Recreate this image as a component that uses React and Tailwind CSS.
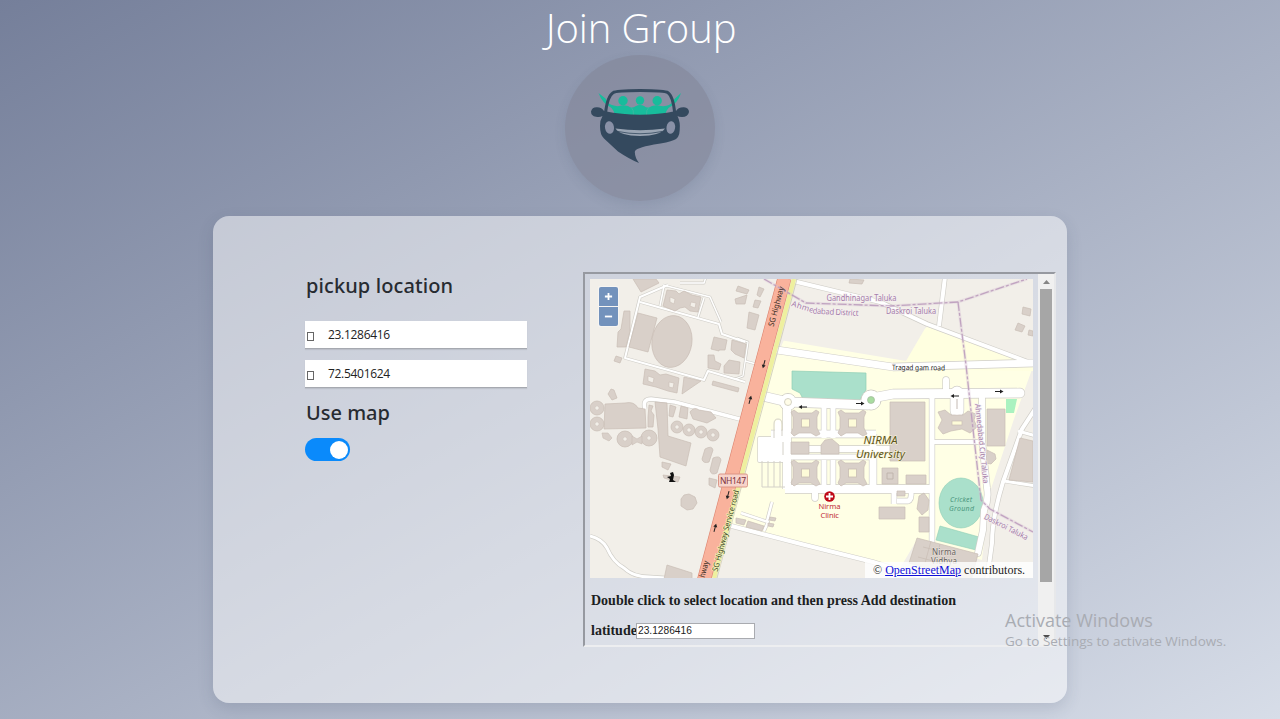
import React from "react";

const B = "#d9d0c9";
const BS = "#c9bdb5";
const SANS = "'Noto Sans','Open Sans',sans-serif";

function CarLogo() {
  return (
    <svg viewBox="590 86 100 78" className="block h-[78px] w-[100px]">
      <g fill="#18bc9c">
        <path d="M598.500 93 L605.500 98.500 Q608 104 612 105 Q616 106.500 619 106 Q623 104.500 628 106 Q632 109 635.500 106.200 Q640 104 644.500 106.200 Q647 109 652 106 Q657 104.500 661 106 Q666 106.500 669 105 Q673 103 674.500 99 L681 93 Q678 103 668.500 108 Q665.500 111 665 115.500 H615 Q614.500 111 611.500 108 Q602 103 598.500 93Z" />
        <circle cx="623" cy="100.800" r="4.700" />
        <circle cx="640" cy="100.500" r="4.200" />
        <circle cx="657.200" cy="100.800" r="4.700" />
      </g>
      <g fill="none" stroke="#4fb5a3" strokeWidth=".6">
        <path d="M631 107 Q634 110 633.500 115" />
        <path d="M649 107 Q646 110 646.500 115" />
      </g>
      <path
        d="M605.500 113 Q607.500 96 613 92.700 Q616 90.800 640 90.600 Q665 90.800 668 92.700 Q673 96 674.700 113"
        fill="none"
        stroke="#34495e"
        strokeWidth="3"
      />
      <path
        fill="#34495e"
        d="M604 111 Q640 118.500 676 111 Q678 107 684 107.200 Q689 108 689 112 Q688 117 682 117 Q678.500 117 677.500 116 Q680.500 122 679.700 130 Q679.500 138 674 140 Q668 142.500 654 144.500 Q634.500 148 634.800 152 Q635 158 639 163 Q630 159.500 618 151.500 L604 138.500 Q600 135 600 126 Q600 120 602.500 116 Q600 117.500 596 116.800 Q591 116 591 111.500 Q592 107 597 107.200 Q602 107.500 604 111Z"
      />
      <ellipse cx="609.500" cy="127.500" rx="4.500" ry="6.300" fill="#8991a7" transform="rotate(-9 609.500 127.500)" />
      <ellipse cx="670.800" cy="127.500" rx="4.300" ry="6.300" fill="#8991a7" transform="rotate(9 670.800 127.500)" />
      <path d="M615.500 128.600 Q640 132 665 128.600 Q660 136 640 136 Q620 136 615.500 128.600Z" fill="#9aa5b4" />
      <path d="M618 131.500 Q640 136 662 131.500" fill="none" stroke="#34495e" strokeWidth=".8" />
    </svg>
  );
}

function Block({ x, y }) {
  return (
    <g transform={`translate(${x} ${y})`}>
      <path d="M0 2 L3 0 L7 3 H21 L25 0 L28 2 L26 7 V18 L29 24 L25 26 L20 23 H8 L3 26 L0 23 L2 18 V7Z" fill={B} stroke={BS} strokeWidth=".7" />
      <rect x="10.500" y="9" width="8" height="8" fill="#fdfbd8" stroke={BS} strokeWidth=".8" />
    </g>
  );
}

function Ring({ x, y, r }) {
  return (
    <g>
      <circle cx={x} cy={y} r={r} fill={B} stroke={BS} strokeWidth=".7" />
      <path d={`M${x - 2.500} ${y} l2.500 -2.500 l2.500 2.500 l-2.500 2.500Z`} fill="#f2efe9" stroke={BS} strokeWidth=".5" />
    </g>
  );
}

function Arrow({ x, y, r }) {
  return (
    <g transform={`translate(${x} ${y}) rotate(${r})`}>
      <path d="M-4 0H2" stroke="#222" strokeWidth="1" />
      <path d="M1 -2L4.500 0L1 2Z" fill="#222" />
    </g>
  );
}

const roads = [
  ["M770 349 L893 367 L1036 363", 7],
  ["M762 396 L788 402 L868 405 L872 398 L893 394 L1020 393", 9],
  ["M787 402 V489", 8],
  ["M824 404 V438 M833 404 V438", 5],
  ["M824 460 V492 M833 460 V492", 5],
  ["M771 434 H876", 7],
  ["M759 438 H785 V461 H759Z", 2],
  ["M762 449 H895", 6],
  ["M785 457 H872", 5],
  ["M785 489 H932", 8],
  ["M873 434 V489", 7],
  ["M815 489 V498", 6],
  ["M932 393 V543", 5],
  ["M933 442 H984", 4],
  ["M946 393 V380", 6],
  ["M957 393 V411", 13],
  ["M982 393 V440 L987 488 Q989 500 984 510 L983 530 L978 553", 6],
  ["M894 489 V504 M897 501 H908 Q912 500 911 490", 5],
  ["M1037 406 L1022 429 L1003 482 Q992 518 992 543 L987 580", 4],
  ["M1004 481 L1036 486 M1018 431 L1036 436", 3],
  ["M793 281 L880 302 L927 324 L1028 362", 4],
  ["M945 277 L939 326", 4],
  ["M720 523 L805 545 L873 562 L930 580", 4],
  ["M741 513 L768 522 L764 531 M767 521 L772 502", 2.5],
  ["M590 536 Q602 539 607 548 Q613 562 624 568 Q633 577 650 577 L665 578", 3],
  ["M645 409 Q642 399 651 399 L675 402 L747 421", 3.6],
  ["M668 285 L640 297 L625 358 L704 380 L708 371 L745 382 M640 302 L719 324 L722 334 L745 342", 2],
  ["M663 285 L710 297 L721 322 M664 286 L660 306 M704 298 L698 317 M680 283 H704 L706 277", 1.5],
  ["M737 338 L748 342 L743 376 L735 379 M745 361 L756 364", 1.3],
];

const buildings = [
  "M633 279 L641 292 L659 283 L656 279Z",
  "M638 313 L657 318 L648 352 L629 347Z",
  "M624 311 L630 311 L630 331 L626 347 L617 347 L618 332 L621 329Z",
  "M616 356 L622 358 L620 363 L614 361Z",
  "M611 389 L614 390 L617 398 L612 400 L608 394Z",
  "M605 404 L625 403 Q634 401 638 408 L645 409 L646 428 L604 429Z",
  "M655 402 L667 403 L668 436 L691 443 L686 466 L660 457 L658 429Z",
  "M649 405 L653 406 L651 411 L654 415 L653 427 L648 427 L648 417Z",
  "M670 405 L676 407 L673 417 L669 416Z M681 406 L688 408 L687 419 L679 417Z",
  "M690 412 Q694 406 699 410 L711 412 L716 418 L707 423 L693 419Z",
  "M713 381 L739 388 L738 392 L712 385Z",
  "M684 377 L701 381 L682 394Z",
  "M714 337 L727 340 L725 350 H719 V351 L711 349Z M732 340 L746 344 L744 358 L735 354 L731 350Z M708 355 L714 355 L715 361 L721 364 L719 370 L708 368Z M729 360 L740 362 L739 374 L724 373 L724 366Z",
  "M749 312 L759 315 L755 330 L747 328Z",
  "M755 300 L761 301 L758 308 L753 307Z M759 287 L764 289 L760 297 L757 295Z",
  "M738 286 L749 290 L747 294 L736 291Z M735 299 L747 295 L745 304 L736 304Z",
  "M850 279 L864 280 L862 284 L849 283Z",
  "M791 442 H809 V454 H791Z M821 445 L825 440 L832 439 L839 445 V454 H821Z",
  "M890 402 H925 V461 H890Z",
  "M882 468 H898 V484 H882Z M906 475 H926 V484 H906Z M879 507 H905 V519 H879Z",
  "M897 491 H905 V496 H897Z",
  "M919 496 L924 493 L929 500 L928 510 L922 515 L917 509Z M919 517 H929 V532 H919Z",
  "M987 409 H1005 V446 H987Z M987 450 L995 454 L996 459 L991 464 L986 463Z",
  "M938 412 L945 410 L951 415 L963 415 L968 411 L976 414 L974 420 L977 427 L970 433 L962 429 L951 431 L943 434 L938 428 L942 420Z",
  "M1020 438 L1033 441 V482 L1009 480Z",
  "M1023 307 L1031 309 L1030 316 L1022 314Z M1018 323 L1025 326 L1022 332 L1015 330Z M1029 330 L1033 331 V336 L1028 335Z",
  "M917 538 L978 554 L971 581 L909 563Z",
  "M736 518 L746 520 L744 525 L736 523Z M748 521 L764 526 L762 531 L746 527Z M770 517 L776 518 L775 521 L769 520Z M768 523 L774 524 L773 527 L768 526Z",
  "M667 565 L692 573 V579 H664Z",
  "M705 449 Q712 445 713 450 L709 462 Q703 464 702 459Z M713 458 Q720 455 721 460 L717 473 Q711 476 710 470Z",
  "M709 478 L717 480 L715 488 L709 485Z M662 462 L671 464 L668 470 L662 467Z M663 475 L680 477 L678 482 L664 478Z",
];

function CampusMap() {
  return (
    <svg viewBox="590 279 443 299" className="block h-[299px] w-[443px] overflow-hidden">
      <rect x="590" y="279" width="443" height="299" fill="#f2efe9" />
      <path
        d="M784 340 L893 356 L927 327 L1025 361 L1034 364 L1014 419 L990 492 L982 560 L915 543 L899 570 L850 556 L718 523 L756 404Z"
        fill="#ffffe5"
      />
      <path d="M893 356 L927 327 L1028 363 L1034 364 V371 L893 369Z" fill="#ffffe0" />
      <path d="M906 361 L927 325 L880 302 L793 281 L780 340Z" fill="#f2efe9" />
      <path d="M792 371 L866 373 V390 L859 401 H804 L800 393 L792 389Z" fill="#aae0cb" stroke="#8fceb5" strokeWidth=".7" />
      <path d="M1006 399 H1017 L1014 413 H1006Z" fill="#aaf2c0" />
      <ellipse cx="961" cy="503" rx="22" ry="25" fill="#aae0cb" stroke="#8fceb5" strokeWidth=".6" />
      <path d="M940 526 L979 537 L976 550 L936 540Z" fill="#aae0cb" stroke="#8fceb5" strokeWidth=".6" />
      <g fill="none" stroke="#d0cec8" strokeLinejoin="round">
        {roads.map(([d, w], i) => (
          <path key={i} d={d} strokeWidth={w + 1.3} strokeLinecap={w === 9 || w === 6 || w === 13 ? "round" : "butt"} />
        ))}
        <circle cx="788" cy="402" r="8.500" strokeWidth="1" />
        <circle cx="871" cy="400" r="10" strokeWidth="1" />
      </g>
      <g fill="none" stroke="#fff" strokeLinejoin="round">
        {roads.map(([d, w], i) => (
          <path key={i} d={d} strokeWidth={w} strokeLinecap={w === 9 || w === 6 || w === 13 ? "round" : "butt"} />
        ))}
      </g>
      <rect x="759" y="438" width="27" height="22" fill="#fff" />
      <circle cx="788" cy="402" r="8" fill="#fff" />
      <circle cx="788" cy="402" r="3.500" fill="#fffde8" stroke="#c9c6b8" strokeWidth=".8" />
      <circle cx="871" cy="400" r="9.500" fill="#fff" />
      <circle cx="871" cy="400" r="3.500" fill="#a8dca0" stroke="#a4b89e" strokeWidth=".7" />
      <g fill="none" stroke="#d4d1c8" strokeWidth="1">
        <path d="M762 461 V487 H785 M768 461 V487 M774 461 V487 M780 461 V487" />
        <path d="M774 438 V424 Q774 419 778 419 Q782 419 782 424 V436 M783 442 V455" />
      </g>
      <path d="M775 439 V424 Q775 420 778 420 Q781 420 781 424 V439Z" fill="#fff" />
      {buildings.map((d, i) => (
        <path key={i} d={d} fill={B} stroke={BS} strokeWidth=".7" strokeLinejoin="round" />
      ))}
      <path d="M667 290 L676 291 L679 294 L684 291 L692 295 L701 297 L698 312 L690 311 L685 307 L680 308 L675 311 L663 306Z" fill={B} stroke={BS} strokeWidth=".7" />
      <path d="M670 297 l5 2 l-1 5 l-4 -2Z M691 302 l5 1 l-1 5 l-5 -2Z" fill="#f2efe9" stroke={BS} strokeWidth=".6" />
      <path d="M645 369 L655 371 L660 375 L666 374 L679 378 L677 393 L668 391 L662 389 L656 387 L643 384Z" fill={B} stroke={BS} strokeWidth=".7" />
      <path d="M648 376 l6 2 l-1 5 l-5 -2Z M669 382 l5 1 l-1 5 l-4 -1Z" fill="#f2efe9" stroke={BS} strokeWidth=".6" />
      <ellipse cx="672" cy="341.500" rx="20" ry="26" fill={B} stroke={BS} strokeWidth=".7" transform="rotate(8 672 341)" />
      <Ring x={597} y={408} r={7} />
      <Ring x={597} y={424} r={7} />
      <Ring x={625} y={439} r={8} />
      <Ring x={649} y={438} r={8} />
      <path d="M632 436 L637 439 L642 436 V444 L637 442 L632 445Z M602 433 L608 433 L612 438 L609 441 L603 438Z" fill={B} stroke={BS} strokeWidth=".6" />
      <Ring x={677} y={427} r={6} />
      <Ring x={689} y={430} r={6} />
      <Ring x={701} y={432} r={6} />
      <Ring x={713} y={435} r={6} />
      <path d="M689 494 l6 3 l2 6 l-4 6 l-6 1 l-6 -4 l0 -7 l3 -4Z" fill={B} stroke={BS} strokeWidth=".7" />
      <Block x={791} y={410} />
      <Block x={838} y={410} />
      <Block x={791} y={460} />
      <Block x={838} y={460} />
      <rect x="952" y="421" width="10" height="4" fill="#fdfbd8" stroke={BS} strokeWidth=".7" />
      <path d="M951 405 H963 V410 Q957 419 951 410Z" fill="#fff" />
      <path d="M887 473 h6 v6 h-6Z M957 399 V409" fill="none" stroke="#bdb2aa" strokeWidth=".9" />
      <path d="M923 547 L951 554 M931 541 L925 563 M940 544 L935 564 M918 557 L960 568" stroke={BS} strokeWidth=".7" />
      <path d="M794 279 L714 578" stroke="#eef09f" strokeWidth="4.500" />
      <path d="M797 279 L717 578" stroke="#c9c8b4" strokeWidth=".8" />
      <path d="M784.500 278 L704 580" stroke="#dc8571" strokeWidth="14" />
      <path d="M784.500 278 L704 580" stroke="#f9b29c" strokeWidth="12.800" />
      <g fill="none" stroke="#a984ad" strokeWidth="1.300" opacity=".85">
        <path d="M764 279 L806 303 L890 306 L958 302 L1027 279" strokeDasharray="9 2 3 2" />
        <path d="M958 302 L966 365 L972 420 L981 500 L990 509 L1033 532" strokeDasharray="9 2 3 2" />
      </g>
      <g stroke="#d9c3d6" strokeWidth="3" fill="none" opacity=".35">
        <path d="M764 279 L806 303 L890 306 L958 302 L1027 279" />
        <path d="M958 302 L966 365 L972 420 L981 500 L990 509 L1033 532" />
      </g>
      <Arrow x={764} y={364} r={105} />
      <Arrow x={750} y={400} r={-75} />
      <Arrow x={728} y={495} r={105} />
      <Arrow x={715} y={528} r={-75} />
      <Arrow x={803} y={407} r={180} />
      <Arrow x={860} y={403.500} r={0} />
      <Arrow x={955} y={396} r={180} />
      <Arrow x={999} y={391.500} r={0} />
      <g fontFamily={SANS} fontSize="8">
        <g fill="#a47ca8" stroke="#f5f0f0" strokeWidth="1.400" paintOrder="stroke">
          <text x="826.500" y="300.500" textLength="70" lengthAdjust="spacingAndGlyphs">Gandhinagar Taluka</text>
          <text x="791" y="306" textLength="23" transform="rotate(18 791 306)">Ahme</text>
          <text x="812.500" y="313.500" textLength="46" transform="rotate(3 812 313)">dabad District</text>
          <text x="886" y="313.500" textLength="50" lengthAdjust="spacingAndGlyphs">Daskroi Taluka</text>
          <text x="975" y="404" fontSize="7.500" textLength="80" lengthAdjust="spacingAndGlyphs" transform="rotate(84 975 404)">Ahmedabad City Taluka</text>
          <text x="983.500" y="518.500" textLength="48" lengthAdjust="spacingAndGlyphs" transform="rotate(27 983.500 518.500)">Daskroi Taluka</text>
        </g>
        <text x="892" y="370" fontSize="7.500" fill="#222" textLength="53" lengthAdjust="spacingAndGlyphs" transform="rotate(.5 892 370)">Tragad gam road</text>
        <text x="773.500" y="327" fill="#382c24" textLength="41" lengthAdjust="spacingAndGlyphs" transform="rotate(-75 773.500 327)">SG Highway</text>
        <text x="717.500" y="572" fill="#3c4620" stroke="#f4f4bb" strokeWidth="1.400" paintOrder="stroke" textLength="84" lengthAdjust="spacingAndGlyphs" transform="rotate(-75 717.500 572)">SG Highway Service road</text>
        <text x="704.500" y="578" fill="#382c24" textLength="17" lengthAdjust="spacingAndGlyphs" transform="rotate(-75 704.500 578)">hway</text>
        <g fill="#665f5c" stroke="#e8e0da" strokeWidth="1" paintOrder="stroke">
          <text x="932" y="554.500" textLength="24">Nirma</text>
          <text x="931" y="564" textLength="26">Vidhya</text>
        </g>
        <g fill="#4b977e" fontStyle="italic" fontSize="7">
          <text x="950" y="502" textLength="22">Cricket</text>
          <text x="949" y="511" textLength="25">Ground</text>
        </g>
      </g>
      <g fontFamily={SANS} fontSize="10.500" fontStyle="italic" fill="#5f5720" stroke="#fbf6dc" strokeWidth="1" paintOrder="stroke">
        <text x="863.500" y="444" textLength="34" lengthAdjust="spacingAndGlyphs">NIRMA</text>
        <text x="856" y="457.500" textLength="49" lengthAdjust="spacingAndGlyphs">University</text>
      </g>
      <rect x="718.500" y="474" width="29" height="13" rx="1.500" fill="#f7d3ca" stroke="#d88f7f" strokeWidth=".9" />
      <text x="720" y="484" fontFamily={SANS} fontSize="8.500" fill="#7c303b" textLength="26">NH147</text>
      <circle cx="829.500" cy="496.500" r="5.300" fill="#bf0a17" />
      <path d="M829.500 493 V500 M826 496.500 H833" stroke="#fff" strokeWidth="1.800" />
      <g fontFamily={SANS} fontSize="7.600" fill="#c12f37">
        <text x="818.500" y="509" textLength="22">Nirma</text>
        <text x="820.500" y="518" textLength="18.500">Clinic</text>
      </g>
      <path d="M670 473 l3 -1 l1 3 l-1 5 l3 2 h-7 l1 -3 l-3 -2 l4 -1Z" fill="#111" />
    </svg>
  );
}

function CoordField({ value }) {
  return (
    <div className="flex h-7 w-[222px] items-center border-b border-[#a6a9b0] bg-white pl-[2px] shadow-[0_1px_1px_rgba(0,0,0,0.08)]">
      <span className="mt-[3px] h-[9px] w-[7px] border border-[#666]" />
      <span className="mt-px ml-[14px] text-[12px] leading-none tracking-[-0.3px] text-[#222]">{value}</span>
    </div>
  );
}

export default function App() {
  return (
    <div className="relative flex h-[719px] w-full flex-col items-center overflow-hidden bg-linear-to-br from-[#757f9a] to-[#d7dde8] font-['Open_Sans','Noto_Sans',sans-serif]">
      <h1 className="h-[55px] pl-[2px] text-[40px] leading-[55px] font-light tracking-[-0.1px] whitespace-nowrap text-white">Join Group</h1>
      <div className="flex h-[146px] w-[150px] shrink-0 justify-center rounded-[50%] bg-[#828698]/60 pt-[31px] shadow-[0_5px_12px_rgba(60,70,100,0.12)]">
        <CarLogo />
      </div>

      <main className="mt-[15px] flex h-[487px] w-[854px] shrink-0 rounded-2xl bg-white/50 pt-14 pl-[92px] shadow-[0_6px_16px_rgba(50,60,90,0.15)]">
        <section className="flex w-[278px] shrink-0 flex-col">
          <h2 className="pl-px font-['Noto_Sans',sans-serif] text-[20px] leading-7 font-medium tracking-[0.1px] whitespace-nowrap text-[#272b31]">pickup location</h2>
          <div className="mt-[21px] flex flex-col gap-[11px]">
            <CoordField value="23.1286416" />
            <CoordField value="72.5401624" />
          </div>
          <h2 className="mt-[11px] pl-px font-['Noto_Sans',sans-serif] text-[20px] leading-7 font-medium text-[#272b31]">Use map</h2>
          <div className="mt-[11px] flex h-[23px] w-[45px] items-center justify-end rounded-full bg-[#0a8afb] pr-[2px]">
            <span className="size-[18px] rounded-full bg-white" />
          </div>
        </section>

        <section className="flex h-[375px] w-[473px] border-2 border-t-[#9699a0] border-r-[#e7e8ea] border-b-[#edeef0] border-l-[#9699a0] font-['Liberation_Serif',serif]">
          <div className="w-[453px] shrink-0 overflow-hidden pt-[5px] pl-[5px]">
            <div className="relative w-[443px]">
              <CampusMap />
              <div className="absolute top-[7px] left-2 flex flex-col gap-px rounded-[2px] bg-white/40 p-px text-white">
                <button className="flex h-[19px] w-[19px] items-center justify-center rounded-t-[2px] bg-[#7392bc]">
                  <svg viewBox="0 0 10 10" className="size-[9px]"><path d="M5 1V9M1 5H9" stroke="white" strokeWidth="2" /></svg>
                </button>
                <button className="flex h-[19px] w-[19px] items-center justify-center rounded-b-[2px] bg-[#7392bc]">
                  <svg viewBox="0 0 10 10" className="size-[9px]"><path d="M1 5H9" stroke="white" strokeWidth="2" /></svg>
                </button>
              </div>
              <p className="absolute right-0 bottom-0 h-[16px] w-[168px] bg-white/80 pl-2 text-[12px] leading-[16px] whitespace-nowrap text-[#222]">
                © <span className="text-[#1010d8] underline">OpenStreetMap</span> contributors.
              </p>
            </div>
            <p className="mt-[15px] pl-px text-[14px] leading-4 font-bold whitespace-nowrap text-[#1c1e22]">
              Double click to select location and then press Add destination
            </p>
            <div className="mt-[14px] flex items-center pl-px">
              <span className="w-[45px] text-[14px] leading-4 font-bold text-[#1c1e22]">latitude</span>
              <span className="flex h-4 w-[119px] items-center border border-[#a9abb0] bg-white pl-px font-['Liberation_Sans',sans-serif] text-[10.200px] text-[#222]">
                23.1286416
              </span>
            </div>
          </div>
          <div className="flex w-4 shrink-0 flex-col items-center bg-[#f0f0f0]">
            <svg viewBox="0 0 15 15" className="size-[15px]"><path d="M4 10L7.500 6L11 10Z" fill="#858585" /></svg>
            <div className="h-[293px] w-3 bg-[#a6a6a6]" />
            <div className="flex-1" />
            <svg viewBox="0 0 15 15" className="size-[15px]"><path d="M4 5L7.500 9L11 5Z" fill="#4e4e4e" /></svg>
          </div>
        </section>
      </main>

      <div className="absolute top-[608px] left-[1005px] whitespace-nowrap text-[#a9acb3]">
        <p className="text-[18px] leading-6">Activate Windows</p>
        <p className="text-[13.500px] leading-[19px]">Go to Settings to activate Windows.</p>
      </div>
    </div>
  );
}
